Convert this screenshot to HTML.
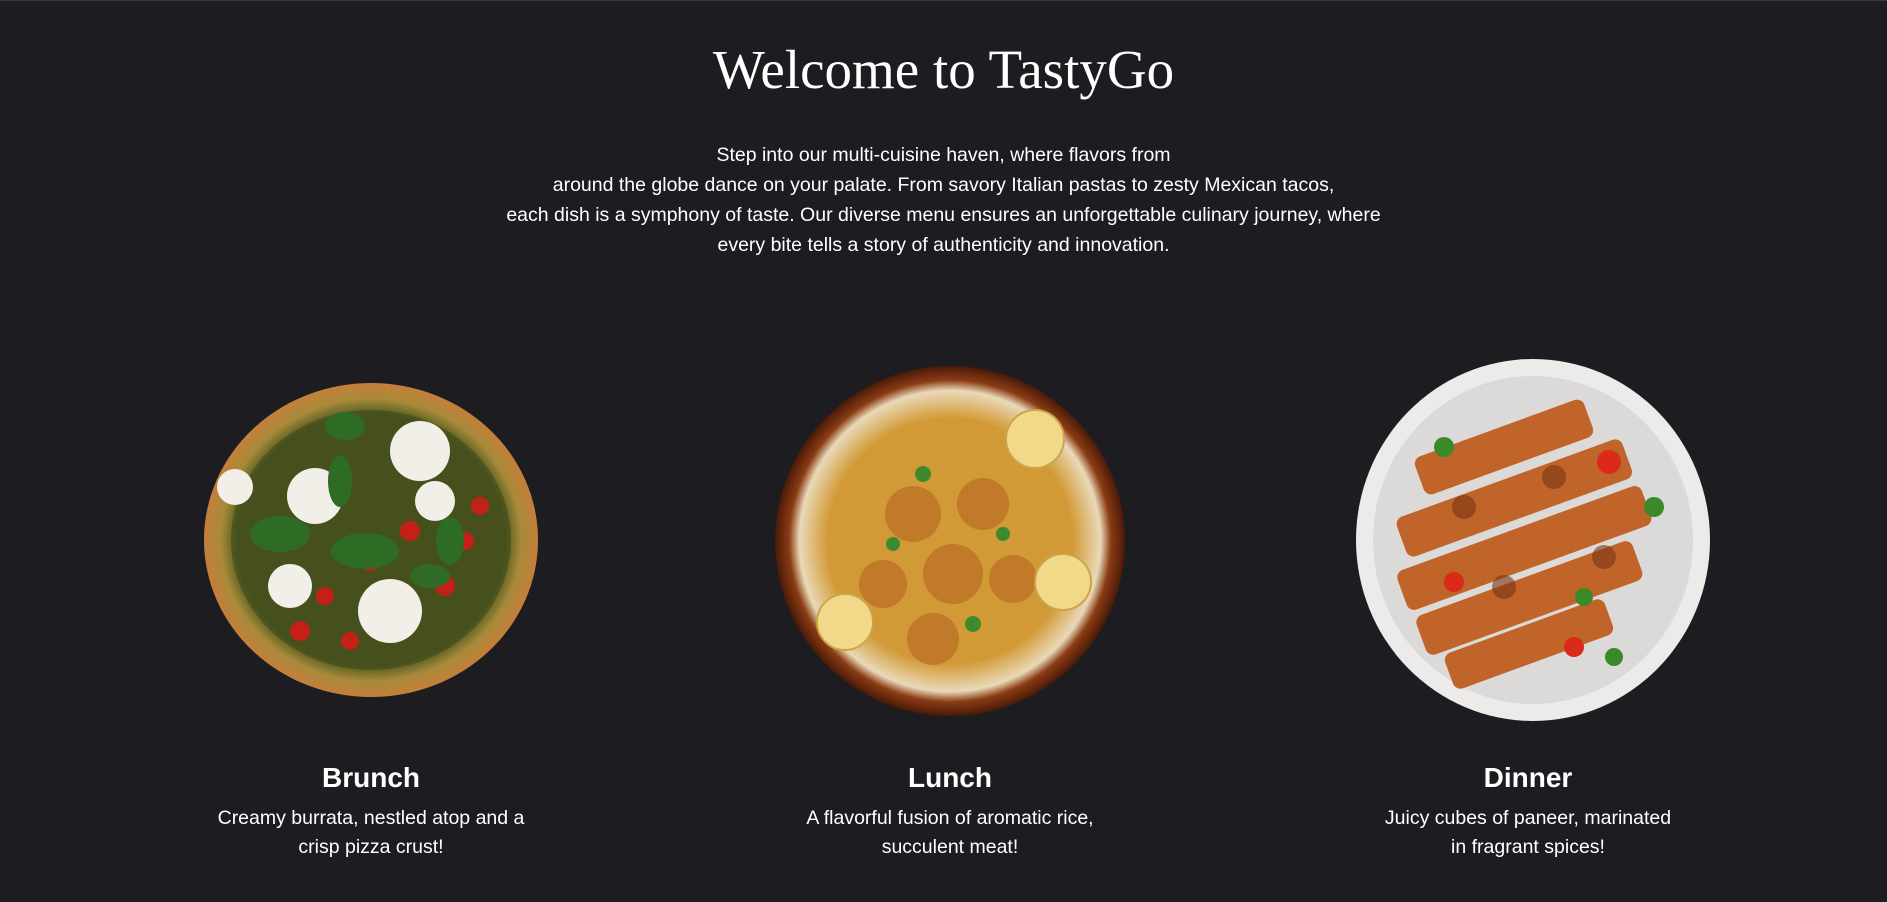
<!DOCTYPE html>
<html><head><meta charset="utf-8"><style>
html,body{margin:0;padding:0}
body{width:1887px;height:902px;background:#1d1c21;border-top:1px solid #3a3a3c;box-sizing:border-box;overflow:hidden;color:#fff;font-family:"Liberation Sans",sans-serif;position:relative}
h1{position:absolute;top:34px;left:0;width:100%;text-align:center;margin:0;font-family:"Liberation Serif",serif;font-weight:normal;font-size:55px;line-height:70px}
.intro{position:absolute;top:139px;left:0;width:100%;text-align:center;font-size:19.5px;line-height:30px;margin:0}
.card{position:absolute;top:755px;width:400px;text-align:center}
.card h2{margin:0;font-size:28px;line-height:44px;font-weight:bold}
.card p{margin:4px 0 0;font-size:19.5px;line-height:29px}
svg{position:absolute}
</style></head><body>
<h1>Welcome to TastyGo</h1>
<p class="intro">Step into our multi-cuisine haven, where flavors from<br>around the globe dance on your palate. From savory Italian pastas to zesty Mexican tacos,<br>each dish is a symphony of taste. Our diverse menu ensures an unforgettable culinary journey, where<br>every bite tells a story of authenticity and innovation.</p>

<svg style="left:195px;top:370px" width="352" height="340" viewBox="0 0 352 340">
<defs><radialGradient id="pz"><stop offset="0.8" stop-color="#4f5a1e"/><stop offset="0.9" stop-color="#a88a3a"/><stop offset="1" stop-color="#c57f3a"/></radialGradient></defs>
<ellipse cx="176" cy="169" rx="167" ry="157" fill="url(#pz)"/>
<ellipse cx="176" cy="169" rx="140" ry="130" fill="#3f4a1a" opacity=".6"/>
<g fill="#f2efe8"><circle cx="225" cy="80" r="30"/><circle cx="120" cy="125" r="28"/><circle cx="240" cy="130" r="20"/><circle cx="195" cy="240" r="32"/><circle cx="95" cy="215" r="22"/><circle cx="40" cy="116" r="18"/></g>
<g fill="#c42018"><circle cx="150" cy="175" r="9"/><circle cx="175" cy="190" r="10"/><circle cx="130" cy="225" r="9"/><circle cx="270" cy="170" r="9"/><circle cx="250" cy="215" r="10"/><circle cx="105" cy="260" r="10"/><circle cx="215" cy="160" r="10"/><circle cx="80" cy="155" r="9"/><circle cx="285" cy="135" r="9"/><circle cx="155" cy="270" r="9"/></g>
<g fill="#2e6b25"><ellipse cx="85" cy="163" rx="30" ry="18"/><ellipse cx="170" cy="180" rx="34" ry="18"/><ellipse cx="150" cy="55" rx="20" ry="14"/><ellipse cx="145" cy="110" rx="12" ry="26"/><ellipse cx="255" cy="170" rx="14" ry="24"/><ellipse cx="235" cy="205" rx="20" ry="12"/></g>
</svg>

<svg style="left:773px;top:363px" width="354" height="354" viewBox="0 0 354 354">
<defs><radialGradient id="br"><stop offset="0.7" stop-color="#d29a36"/><stop offset="0.86" stop-color="#e9d9b8"/><stop offset="0.92" stop-color="#8a3c14"/><stop offset="1" stop-color="#4a1a08"/></radialGradient></defs>
<circle cx="177" cy="177" r="175" fill="url(#br)"/>
<g fill="#c07a2a"><circle cx="140" cy="150" r="28"/><circle cx="210" cy="140" r="26"/><circle cx="180" cy="210" r="30"/><circle cx="110" cy="220" r="24"/><circle cx="240" cy="215" r="24"/><circle cx="160" cy="275" r="26"/></g>
<g fill="#3d8a2e"><circle cx="150" cy="110" r="8"/><circle cx="230" cy="170" r="7"/><circle cx="120" cy="180" r="7"/><circle cx="200" cy="260" r="8"/></g>
<g fill="#f2d98a" stroke="#caa54a" stroke-width="2"><circle cx="262" cy="75" r="29"/><circle cx="290" cy="218" r="28"/><circle cx="72" cy="258" r="28"/></g>
</svg>

<svg style="left:1354px;top:356px" width="358" height="366" viewBox="0 0 358 366">
<ellipse cx="179" cy="183" rx="177" ry="181" fill="#ecebea"/>
<ellipse cx="179" cy="183" rx="160" ry="164" fill="#dcdad8"/>
<g fill="#c0642a"><rect x="60" y="70" width="180" height="40" rx="8" transform="rotate(-20 150 90)"/><rect x="40" y="120" width="240" height="42" rx="8" transform="rotate(-20 160 140)"/><rect x="40" y="170" width="260" height="42" rx="8" transform="rotate(-20 170 190)"/><rect x="60" y="220" width="230" height="42" rx="8" transform="rotate(-20 175 240)"/><rect x="90" y="268" width="170" height="38" rx="8" transform="rotate(-20 175 287)"/></g>
<g fill="#7a3414" opacity=".6"><circle cx="110" cy="150" r="12"/><circle cx="200" cy="120" r="12"/><circle cx="250" cy="200" r="12"/><circle cx="150" cy="230" r="12"/></g>
<g fill="#d92a1a"><circle cx="255" cy="105" r="12"/><circle cx="100" cy="225" r="10"/><circle cx="220" cy="290" r="10"/></g>
<g fill="#3a8a2a"><circle cx="90" cy="90" r="10"/><circle cx="300" cy="150" r="10"/><circle cx="230" cy="240" r="9"/><circle cx="260" cy="300" r="9"/></g>
</svg>

<div class="card" style="left:171px"><h2>Brunch</h2><p>Creamy burrata, nestled atop and a<br>crisp pizza crust!</p></div>
<div class="card" style="left:750px"><h2>Lunch</h2><p>A flavorful fusion of aromatic rice,<br>succulent meat!</p></div>
<div class="card" style="left:1328px"><h2>Dinner</h2><p>Juicy cubes of paneer, marinated<br>in fragrant spices!</p></div>
</body></html>
